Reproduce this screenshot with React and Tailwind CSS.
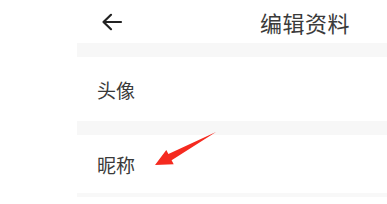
export default function App() {
  const font = { fontFamily: '"Noto Sans CJK SC", "Noto Sans", sans-serif' };
  return (
    <div className="relative w-[387px] h-[204px] bg-white overflow-hidden flex" style={font}>
      <div className="w-[77px] shrink-0" />
      <div className="flex-1 flex flex-col">
        <div className="h-[43px] flex items-center pl-[24px] pr-[37px] justify-between">
          <svg width="22" height="18" viewBox="0 0 22 18">
            <path d="M20 9H2.5M10 1.8L2.5 9L10 16.2" fill="none" stroke="#222" strokeWidth="2.2" strokeLinecap="round" strokeLinejoin="round" />
          </svg>
          <span className="text-[22px] leading-none text-[#3a3a3a] tracking-[0.5px]">编辑资料</span>
        </div>
        <div className="h-[14px] bg-[#f7f7f7]" />
        <div className="h-[64px] flex items-center pl-[20px]">
          <span className="text-[19px] leading-none text-[#3a3a3a]">头像</span>
        </div>
        <div className="h-[14px] bg-[#f7f7f7]" />
        <div className="h-[58px] flex items-center pl-[20px]">
          <span className="text-[19px] leading-none text-[#3a3a3a]">昵称</span>
        </div>
        <div className="h-[4px] bg-[#f8f8f8]" />
      </div>
      <svg className="absolute left-0 top-0" width="387" height="204" viewBox="0 0 387 204">
        <polygon points="155,165 166.3,150 168.4,154 216,132 171.6,160.2 173.7,164.2" fill="#f52a1f" />
      </svg>
    </div>
  );
}
